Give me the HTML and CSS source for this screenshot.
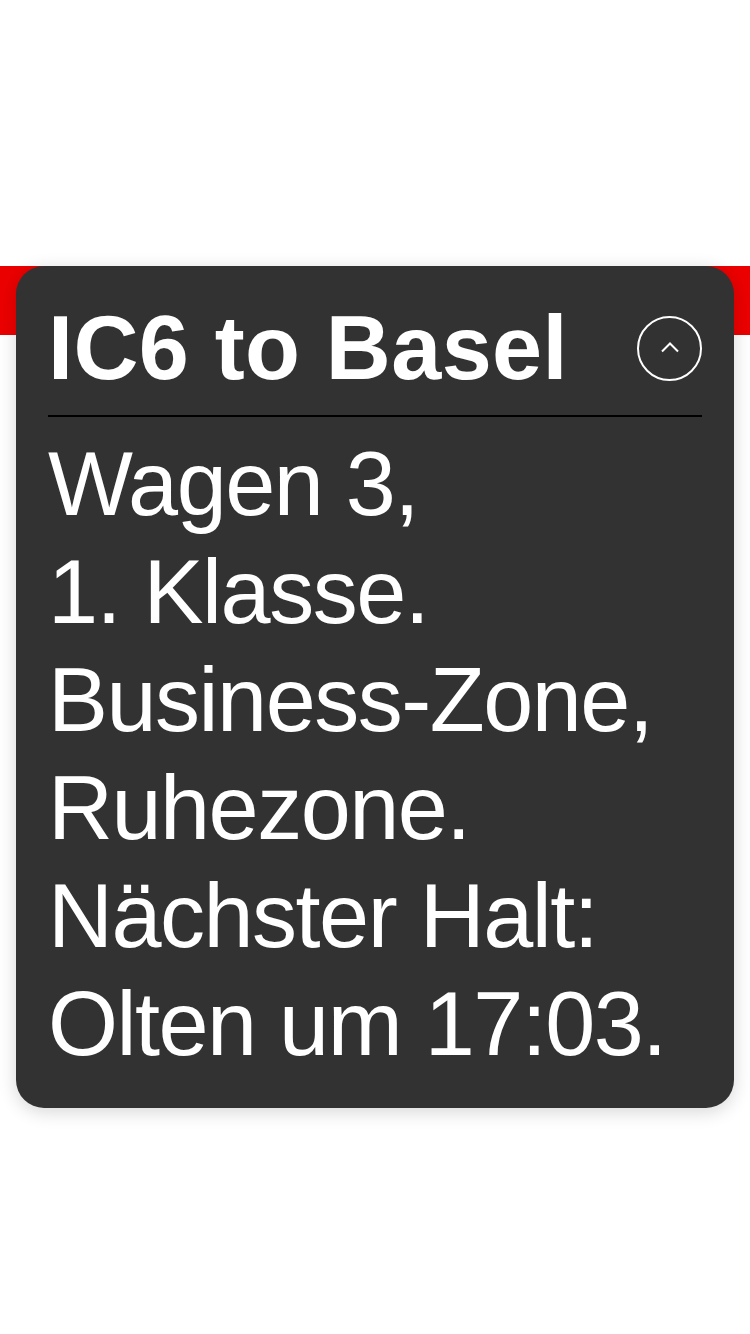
FILE: index.html
```html
<!DOCTYPE html>
<html lang="de">
<head>
<meta charset="utf-8">
<title>IC6 to Basel</title>
<link rel="stylesheet" href="styles.css">
</head>
<body>
<div class="page">
  <div class="band"></div>
  <section class="card">
    <header class="card-head">
      <h1 class="title">IC6 to Basel</h1>
      <button class="toggle" aria-label="Einklappen">
        <svg width="18" height="12" viewBox="0 0 18 12"><polyline points="1,10.5 9,2.5 17,10.5" fill="none" stroke="#fff" stroke-width="2"/></svg>
      </button>
    </header>
    <div class="divider"></div>
    <p class="info">Wagen 3,<br>1. Klasse.<br>Business-Zone,<br>Ruhezone.<br>Nächster Halt:<br>Olten um 17:03.</p>
  </section>
</div>
</body>
</html>
```
FILE: styles.css
```css
* { box-sizing: border-box; }
html, body { margin: 0; padding: 0; background: #fff; }
body { font-family: "Liberation Sans", Arial, sans-serif; }
.page { padding-top: 266px; min-height: 1334px; }
.band { height: 69px; background: #eb0000; }
.card {
  position: relative;
  margin: -69px 16px 0;
  background: #323232;
  border-radius: 28px;
  padding: 37px 32px 30px;
  box-shadow: 0 4px 18px rgba(0,0,0,0.16);
  color: #fff;
}
.card-head {
  display: flex;
  align-items: center;
  justify-content: space-between;
  height: 90px;
}
.title {
  margin: 0;
  font-size: 90px;
  line-height: 90px;
  font-weight: 700;
  letter-spacing: 0.4px;
}
.toggle {
  width: 65px;
  height: 65px;
  border: 2px solid #fff;
  border-radius: 50%;
  background: transparent;
  display: flex;
  align-items: center;
  justify-content: center;
  padding: 0 0 3px;
}
.divider { height: 2px; background: #000; margin-top: 22px; }
.info {
  margin: 13px 0 0;
  font-size: 90px;
  line-height: 108px;
  font-weight: 400;
  letter-spacing: -1.5px;
}
```
